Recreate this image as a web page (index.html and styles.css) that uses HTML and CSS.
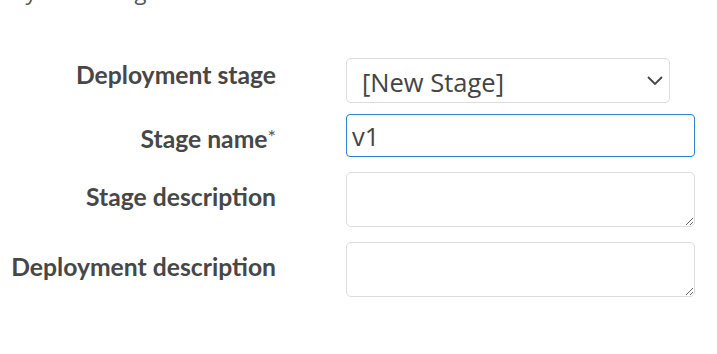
FILE: index.html
```html
<!DOCTYPE html>
<html>
<head>
<meta charset="utf-8">
<link rel="stylesheet" href="styles.css">
</head>
<body>
<div class="page">
  <p class="intro">by the storage</p>
  <form class="form">
    <div class="row row-select">
      <label class="label" for="stage">Deployment stage</label>
      <div class="control">
        <div class="select-wrap">
          <select id="stage" class="select">
            <option>[New Stage]</option>
          </select>
          <svg class="chevron" width="16" height="9" viewBox="0 0 16 9" aria-hidden="true">
            <path d="M1 1 L8 8 L15 1" fill="none" stroke="#444" stroke-width="1.8"/>
          </svg>
        </div>
      </div>
    </div>
    <div class="row row-input">
      <label class="label" for="name">Stage name<span class="req">*</span></label>
      <div class="control">
        <input id="name" class="input focused" type="text" value="v1">
      </div>
    </div>
    <div class="row row-area">
      <label class="label" for="sdesc">Stage description</label>
      <div class="control">
        <textarea id="sdesc" class="textarea"></textarea>
      </div>
    </div>
    <div class="row row-area">
      <label class="label" for="ddesc">Deployment description</label>
      <div class="control">
        <textarea id="ddesc" class="textarea"></textarea>
      </div>
    </div>
  </form>
</div>
</body>
</html>
```
FILE: styles.css
```css
* { box-sizing: border-box; }
html, body { margin: 0; padding: 0; background: #fff; }
body { font-family: Lato, "Open Sans", sans-serif; color: #444; }
.page { width: 717px; height: 354px; overflow: hidden; }
.intro {
  margin: -22px 0 0 12px;
  font-size: 22px;
  line-height: 26px;
  color: #555;
  font-family: "Open Sans", sans-serif;
}
.form {
  display: flex;
  flex-direction: column;
  margin-top: 54px;
}
.row {
  display: grid;
  grid-template-columns: 276px 1fr;
  column-gap: 70px;
  padding-right: 21px;
}
.row-select { margin-bottom: 11px; }
.row-input { margin-bottom: 15px; }
.row-area + .row-area { margin-top: 15px; }
.label {
  text-align: right;
  font-weight: 700;
  font-size: 24.7px;
  line-height: 30px;
  color: #474747;
  white-space: nowrap;
}
.row-select .label { padding-top: 2px; }
.row-input .label { padding-top: 7px; }
.row-area .label { padding-top: 10px; }
.req { font-weight: 400; font-size: 20px; vertical-align: 4px; color: #555; }
.select-wrap { position: relative; width: 324px; }
.select {
  appearance: none;
  -webkit-appearance: none;
  width: 324px;
  height: 45px;
  border: 1px solid #ddd;
  border-radius: 5px;
  background: #fff;
  padding: 2px 0 0 15px;
  font-family: "Open Sans", sans-serif;
  font-size: 25.5px;
  color: #444;
  outline: none;
}
.chevron { position: absolute; right: 7px; top: 18px; pointer-events: none; }
.input {
  width: 349px;
  height: 43px;
  border: 1px solid #2f7fd6;
  border-radius: 4px;
  padding: 0 5px;
  font-family: "Open Sans", sans-serif;
  font-size: 25.5px;
  color: #444;
  outline: none;
}
.textarea {
  display: block;
  width: 349px;
  height: 55px;
  border: 1px solid #ddd;
  border-radius: 5px;
  resize: vertical;
  font-family: "Open Sans", sans-serif;
  font-size: 18px;
  outline: none;
}
```
